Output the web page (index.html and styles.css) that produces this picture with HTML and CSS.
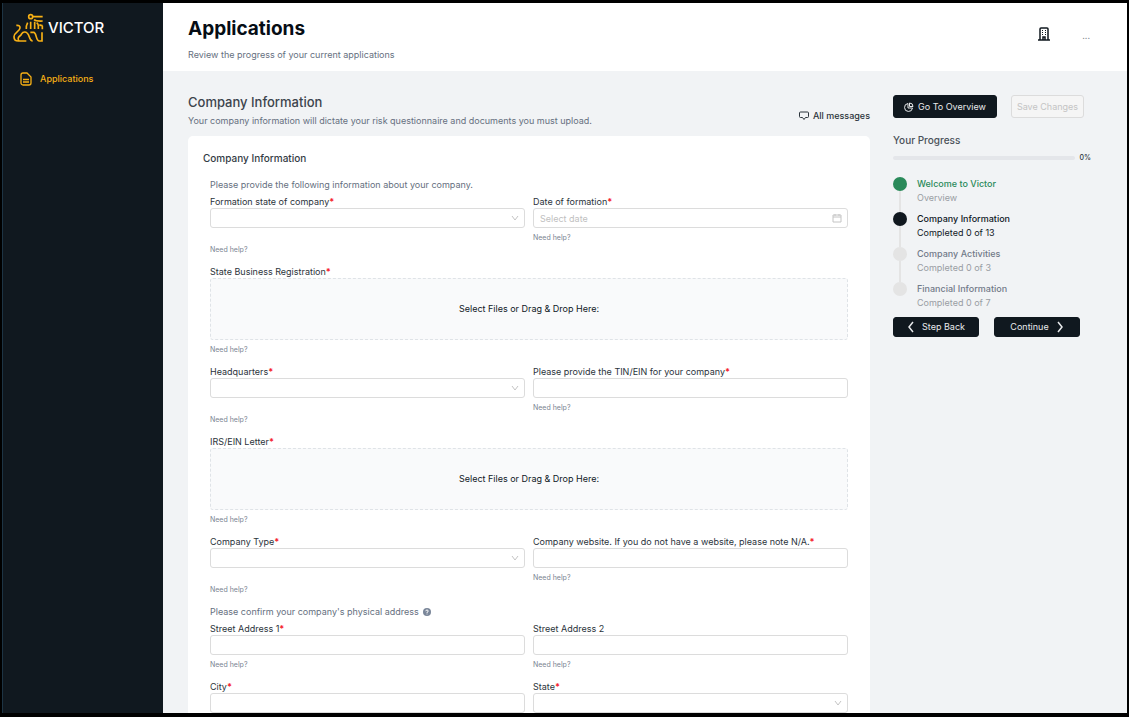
FILE: index.html
```html
<!DOCTYPE html>
<html lang="en">
<head>
<meta charset="utf-8">
<meta name="viewport" content="width=device-width, initial-scale=1">
<title>Victor – Applications</title>
<link rel="stylesheet" href="styles.css">
</head>
<body>
<div class="app">
  <nav class="sidebar" aria-label="Main">
    <a class="brand" href="#">
      <svg class="brand-mark" viewBox="36 38 96 90" aria-hidden="true">
        <circle cx="92" cy="49" r="6"/>
        <path d="M98 49h30M102 58q6 5 26 4M79 86q-1-10 4-19M92 86V64M104 86V64M115 86V76q0-5-5-9M118 73q4 3 10 3M127 76v11"/>
        <path d="M49 75q12-1 11 8c-1 11-18 13-18 26q0 13 13 13h24M57 122c-7-9 1-14 5-17 4-4 3-10 12-10 17 0 11 27 24 27M91 96h10c9 0 6 26 17 26h8V96"/>
      </svg>
      <span class="brand-name">VICTOR</span>
    </a>
    <a class="nav-item" href="#">
      <svg class="icon-doc" viewBox="0 0 12 14" aria-hidden="true"><path d="M3 1h4l4 4v6a2 2 0 0 1-2 2H3a2 2 0 0 1-2-2V3a2 2 0 0 1 2-2zM3 7.500h6M3 10h6"/></svg>
      Applications
    </a>
  </nav>
  <div class="page">
    <header class="topbar">
      <div>
        <h1>Applications</h1>
        <p class="lead">Review the progress of your current applications</p>
      </div>
      <div class="top-actions">
        <button class="plain" aria-label="Company">
          <svg class="icon-building" viewBox="0 0 12 14" aria-hidden="true"><path d="M2 13V2q0-1 1-1h6q1 0 1 1v11M0 13h12M5 13v-3h2v3"/><path class="dots" d="M4 3.500h1M7 3.500h1M4 5.500h1M7 5.500h1M4 7.500h1M7 7.500h1"/></svg>
        </button>
        <button class="plain more" aria-label="More">...</button>
      </div>
    </header>
    <div class="content">
      <main class="main">
        <div class="section-head">
          <div>
            <h2>Company Information</h2>
            <p>Your company information will dictate your risk questionnaire and documents you must upload.</p>
          </div>
          <button class="plain messages">
            <svg class="icon-chat" viewBox="0 0 10 10" aria-hidden="true"><path d="M1.500 1h7q1 0 1 1v3.500q0 1-1 1H6.500L5 8.500 3.500 6.500h-2q-1 0-1-1V2q0-1 1-1z"/></svg>
            All messages
          </button>
        </div>
        <form class="card">
          <h3>Company Information</h3>
          <div class="fields">
            <p class="note">Please provide the following information about your company.</p>
            <div class="field tall">
              <label for="fstate">Formation state of company<b>*</b></label>
              <div class="control"><select id="fstate"><option></option></select><svg class="chevron" viewBox="0 0 8 8" aria-hidden="true"><path d="M1 2l3 4 3-4"/></svg></div>
              <a href="#">Need help?</a>
            </div>
            <div class="field">
              <label for="fdate">Date of formation<b>*</b></label>
              <div class="control"><input id="fdate" type="text" placeholder="Select date"><svg class="calendar" viewBox="0 0 10 10" aria-hidden="true"><path d="M1 2h8v7H1zM1 4h8M3 1v2M7 1v2"/></svg></div>
              <a href="#">Need help?</a>
            </div>
            <div class="field wide">
              <label for="reg">State Business Registration<b>*</b></label>
              <label class="drop">Select Files or Drag &amp; Drop Here:<input id="reg" type="file"></label>
              <a href="#">Need help?</a>
            </div>
            <div class="field tall">
              <label for="hq">Headquarters<b>*</b></label>
              <div class="control"><select id="hq"><option></option></select><svg class="chevron" viewBox="0 0 8 8" aria-hidden="true"><path d="M1 2l3 4 3-4"/></svg></div>
              <a href="#">Need help?</a>
            </div>
            <div class="field">
              <label for="tin">Please provide the TIN/EIN for your company<b>*</b></label>
              <div class="control"><input id="tin" type="text"></div>
              <a href="#">Need help?</a>
            </div>
            <div class="field wide">
              <label for="irs">IRS/EIN Letter<b>*</b></label>
              <label class="drop">Select Files or Drag &amp; Drop Here:<input id="irs" type="file"></label>
              <a href="#">Need help?</a>
            </div>
            <div class="field tall">
              <label for="ctype">Company Type<b>*</b></label>
              <div class="control"><select id="ctype"><option></option></select><svg class="chevron" viewBox="0 0 8 8" aria-hidden="true"><path d="M1 2l3 4 3-4"/></svg></div>
              <a href="#">Need help?</a>
            </div>
            <div class="field">
              <label for="site">Company website. If you do not have a website, please note N/A.<b>*</b></label>
              <div class="control"><input id="site" type="text"></div>
              <a href="#">Need help?</a>
            </div>
            <p class="note">Please confirm your company's physical address
              <svg class="icon-help" viewBox="0 0 8 8" aria-hidden="true"><circle cx="4" cy="4" r="4"/><path d="M2.800 3.200Q2.800 2 4 2t1.200 1.100Q5.200 4 4 4.300V5M4 5.600v.8"/></svg>
            </p>
            <div class="field">
              <label for="st1">Street Address 1<b>*</b></label>
              <div class="control"><input id="st1" type="text"></div>
              <a href="#">Need help?</a>
            </div>
            <div class="field">
              <label for="st2">Street Address 2</label>
              <div class="control"><input id="st2" type="text"></div>
              <a href="#">Need help?</a>
            </div>
            <div class="field">
              <label for="city">City<b>*</b></label>
              <div class="control"><input id="city" type="text"></div>
            </div>
            <div class="field">
              <label for="state">State<b>*</b></label>
              <div class="control"><select id="state"><option></option></select><svg class="chevron" viewBox="0 0 8 8" aria-hidden="true"><path d="M1 2l3 4 3-4"/></svg></div>
            </div>
          </div>
        </form>
      </main>
      <aside class="aside">
        <div class="actions">
          <button class="btn overview">
            <svg class="icon-pie" viewBox="0 0 10 10" aria-hidden="true"><path d="M4 1.500A4 4 0 1 0 8.500 6H4zM5.500 1v3.500H9A3.500 3.500 0 0 0 5.500 1z"/></svg>
            Go To Overview
          </button>
          <button class="btn ghost" disabled>Save Changes</button>
        </div>
        <h2 class="progress-title">Your Progress</h2>
        <div class="progress"><div class="track" role="progressbar" aria-label="Your Progress" aria-valuenow="0"></div><span>0%</span></div>
        <ol class="steps">
          <li class="done"><strong>Welcome to Victor</strong><span>Overview</span></li>
          <li class="current"><strong>Company Information</strong><span>Completed 0 of 13</span></li>
          <li><strong>Company Activities</strong><span>Completed 0 of 3</span></li>
          <li><strong>Financial Information</strong><span>Completed 0 of 7</span></li>
        </ol>
        <div class="step-nav">
          <button class="btn"><svg class="arrow" viewBox="0 0 8 12" aria-hidden="true"><path d="M6 1L2 6l4 5"/></svg>Step Back</button>
          <button class="btn">Continue<svg class="arrow" viewBox="0 0 8 12" aria-hidden="true"><path d="M2 1l4 5-4 5"/></svg></button>
        </div>
      </aside>
    </div>
  </div>
</div>
</body>
</html>
```
FILE: styles.css
```css
* { box-sizing: border-box; }
body {
  margin: 0;
  font-family: Inter, "Liberation Sans", sans-serif;
  font-size: 9px;
  line-height: 12px;
  color: #2b333b;
}
h1, h2, h3, p, ol { margin: 0; padding: 0; }
button, input, select { font: inherit; color: inherit; }
button { cursor: pointer; }
a { color: inherit; text-decoration: none; }
svg { fill: none; stroke: currentColor; flex: none; }

.app {
  display: flex;
  height: 100vh;
  border: solid #000;
  border-width: 3px 2px 4px;
  overflow: hidden;
}
.sidebar {
  flex: none;
  width: 161px;
  padding: 10px 9px;
  background: #10181f;
  border-left: 1px solid #1d3444;
  color: #f7b015;
}
.brand { display: flex; align-items: center; gap: 4px; }
.brand-mark { width: 32px; height: 30px; stroke-width: 5; }
.brand-name { font-size: 15px; line-height: 20px; font-weight: 500; color: #fff; }
.nav-item {
  display: flex;
  align-items: center;
  gap: 8px;
  margin-top: 29px;
  padding-left: 8px;
  font-weight: 500;
}
.icon-doc { width: 12px; height: 14px; stroke-width: 1.300; }

.page { flex: 1; min-width: 0; display: flex; flex-direction: column; background: #f1f3f5; }
.topbar {
  flex: none;
  display: flex;
  justify-content: space-between;
  padding: 14px 37px 10px 25px;
  background: #fff;
}
h1 { font-size: 19px; line-height: 24px; font-weight: 700; color: #060d15; }
.lead { margin-top: 8px; color: #667080; }
.top-actions { display: flex; align-items: center; gap: 32px; height: 34px; }
.plain { display: flex; align-items: center; padding: 0; border: 0; background: none; }
.icon-building { width: 12px; height: 14px; color: #10181f; stroke-width: 1.500; }
.icon-building .dots { stroke-width: 1; }
.more { padding-top: 4px; color: #8a8f96; }

.content { flex: 1; min-height: 0; display: flex; gap: 23px; padding: 24px 36px 0 25px; overflow: hidden; }
.main { flex: 1; min-width: 0; }
.section-head { display: flex; justify-content: space-between; align-items: flex-end; height: 32px; }
.section-head h2 { font-size: 13px; line-height: 16px; font-weight: 500; color: #3c444c; }
.section-head p { margin-top: 5px; color: #667080; }
.messages { gap: 4px; margin-bottom: 5px; font-weight: 500; }
.icon-chat { width: 10px; height: 10px; }

.card { margin-top: 9px; padding: 15px 22px 0 15px; background: #fff; border-radius: 5px; }
.card h3 { font-size: 10px; line-height: 14px; font-weight: 500; color: #333b44; }
.fields {
  display: grid;
  grid-template-columns: 1fr 1fr;
  column-gap: 8px;
  margin-top: 14px;
  padding-left: 7px;
}
.note { grid-column: 1 / -1; display: flex; align-items: center; gap: 4px; margin-bottom: 5px; color: #667080; }
.icon-help { width: 8px; height: 8px; stroke: #fff; }
.icon-help circle { fill: #7a8699; stroke: none; }
.field { display: flex; flex-direction: column; padding-bottom: 10px; }
.field > a { margin-top: 4px; align-self: flex-start; font-size: 7px; color: #7b8492; }
.tall > a { margin-top: 16px; }
.wide { grid-column: 1 / -1; }
.field b { color: #f5222d; }
.control { position: relative; display: flex; }
.control input, .control select {
  width: 100%;
  height: 20px;
  padding: 0 6px;
  border: 1px solid #dcdcdc;
  border-radius: 3px;
  background: #fff;
  appearance: none;
  outline: 0;
}
.control input::placeholder { color: #bfbfbf; }
.chevron, .calendar { position: absolute; right: 6px; top: 6px; width: 8px; height: 8px; color: #c4c4c4; pointer-events: none; }
.calendar { top: 5px; width: 10px; height: 10px; }
.drop {
  display: flex;
  align-items: center;
  justify-content: center;
  height: 62px;
  border: 1px dashed #dfe3e7;
  border-radius: 3px;
  background: #f9fafb;
  color: #10181f;
}
.drop input { position: absolute; width: 1px; height: 1px; opacity: 0; }

.aside { flex: none; width: 198px; }
.actions { display: flex; gap: 14px; }
.btn {
  display: flex;
  align-items: center;
  justify-content: center;
  height: 20px;
  padding: 0;
  border: 1px solid #10181f;
  border-radius: 3px;
  background: #10181f;
  color: #e8eaec;
  white-space: nowrap;
}
.actions .btn { height: 23px; }
.overview { width: 104px; gap: 4px; }
.icon-pie { width: 10px; height: 10px; }
.actions .ghost { width: 73px; border-color: #dcdcdc; background: #f5f5f5; color: #c4c4c4; }
.progress-title { margin-top: 15px; font-size: 10px; line-height: 14px; font-weight: 500; color: #4a5159; }
.progress { display: flex; align-items: center; gap: 5px; margin-top: 5px; font-size: 7px; font-weight: 500; }
.track { flex: 1; height: 4px; border-radius: 2px; background: #e4e6ea; }
.steps { margin-top: 13px; list-style: none; }
.steps li { position: relative; height: 35px; padding-left: 24px; color: #999da3; }
.steps strong, .steps span { display: block; line-height: 14px; }
.steps strong { font-weight: 500; color: #717a89; }
.steps li::before {
  content: "";
  position: absolute;
  left: 0;
  top: 0;
  width: 14px;
  height: 14px;
  border-radius: 50%;
  background: #e4e4e4;
}
.steps li:not(:last-child)::after {
  content: "";
  position: absolute;
  left: 6px;
  top: 14px;
  width: 2px;
  height: 21px;
  background: #e4e4e4;
}
.steps .done::before { background: #2a8a5a; }
.steps .done strong { color: #2a8a5a; }
.steps .current::before { background: #10181f; }
.steps .current, .steps .current strong { color: #10181f; }
.step-nav { display: flex; gap: 15px; }
.step-nav .btn { width: 86px; gap: 7px; }
.arrow { width: 8px; height: 12px; stroke-width: 1.500; }
```
